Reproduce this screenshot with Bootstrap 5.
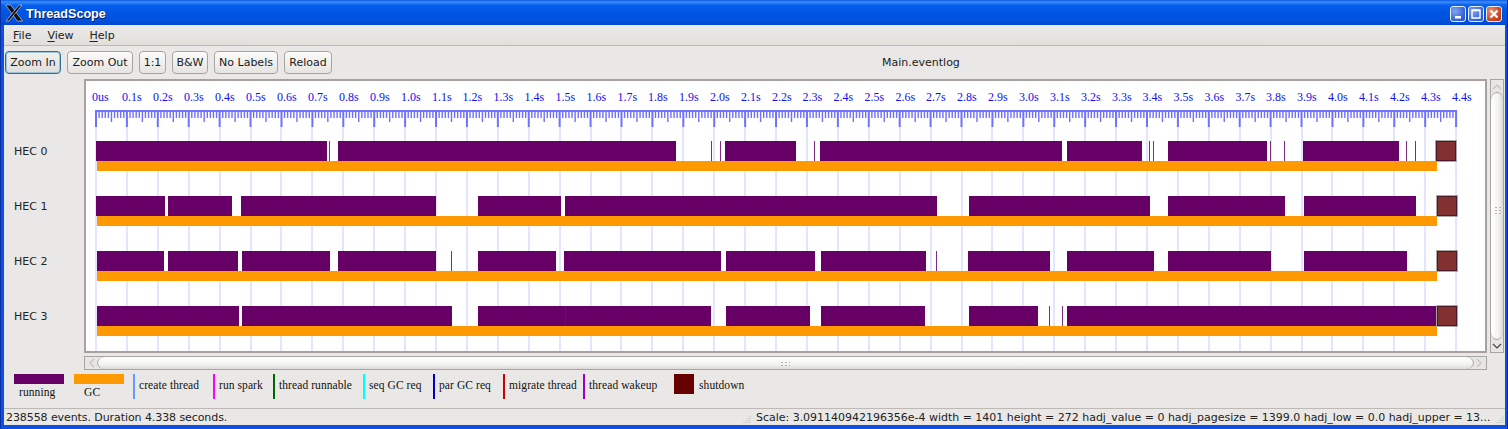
<!DOCTYPE html>
<html lang="en">
<head>
<meta charset="utf-8">
<title>ThreadScope</title>
<link href="https://cdn.jsdelivr.net/npm/bootstrap@5.3.0/dist/css/bootstrap.min.css" rel="stylesheet">
<style>
html,body{margin:0;height:429px;width:1508px;overflow:hidden;background:#0a3fd0}
body{font-family:"DejaVu Sans",sans-serif;font-size:11px;color:#111}
.xp-win{width:1508px;height:429px;background:#0d4fe0;border-left:1px solid #0831a8;border-right:1px solid #08239a}
.xp-title{height:25px;padding:0 5px 0 4px;background:linear-gradient(#0a5ae0 0,#3d8cf8 2px,#0660f0 5px,#0054e3 12px,#0050dc 22px,#0046c8 25px)}
.xp-logo{width:18px;height:18px;margin-right:3px;flex:none}
.xp-name{font-family:"Liberation Sans",sans-serif;font-weight:700;font-size:12.6px;color:#fff;text-shadow:1px 1px 0 #0a1a60;margin-top:3px}
.xp-ctls{column-gap:2px;margin-top:3px}
.xp-ctl{width:16px;height:16px;flex:none;border:1px solid #e8eefc;border-radius:3px;background:radial-gradient(circle at 30% 30%,#7ea4f0,#2f5bd2 75%)}
.xp-ctl svg{display:block}
.xp-ctl.xp-close{background:radial-gradient(circle at 30% 30%,#f09070,#c43a14 75%)}
.xp-body{margin:0 2px 0 3px;height:400px;background:#eae8e6;position:relative}
.xp-menu{height:21px;background:linear-gradient(#ecebe9,#e2dfdb);border-bottom:1px solid #bdb9b5;padding-left:9px;gap:16px}
.xp-menu span{line-height:21px;color:#222}
.xp-menu u{text-underline-offset:2px}
.xp-tools{height:33px;padding:5px 0 0 1px;gap:6px}
.xp-btn{height:23px;padding:0;font:11px "DejaVu Sans",sans-serif;color:#1a1a1a;line-height:20px;border:1px solid #a8a5a1;border-radius:4px;background:linear-gradient(#fbfbfa,#e6e4e1)}
.xp-btn:hover{border-color:#a8a5a1;color:#1a1a1a}
.xp-btn.xp-focus{border:1px solid #2f6f8f;box-shadow:inset 0 0 0 1px #9fc4d8;background:linear-gradient(#f2f1ef,#e0dedb)}
.xp-w56{width:56px}.xp-w66{width:66px}.xp-w27{width:27px}.xp-w36{width:36px}.xp-w64{width:64px}.xp-w48{width:48px}
.xp-file{position:absolute;left:878px;top:30px;color:#222}
.xp-main{height:274px}
.xp-side{width:80px;flex:none;padding:66px 0 0 10px}
.xp-hec{height:55px;line-height:14px;color:#222}
.xp-frame{width:1403px;flex:none;height:274px;border:2px solid #a8a19d;background:#fff}
.xp-frame svg{display:block}
.xp-ax{font-family:"Liberation Serif",serif;font-size:12px;fill:#1010f0}
.xp-vs{width:14px;flex:none;height:274px;margin-left:3px;border:1px solid #a8a5a1;background:#e8e6e3;position:relative}
.xp-vs i{position:absolute;left:0;right:0;top:12px;bottom:12px;border-radius:6px/8px;border-top:1px solid #a8a5a1;border-bottom:1px solid #a8a5a1;background:linear-gradient(90deg,#fff,#f4f3f2 60%,#dcdad7)}
.xp-hs{margin:3px 0 0 80px;width:1403px;height:14px;border:1px solid #a8a5a1;background:#e8e6e3;position:relative}
.xp-hs i{position:absolute;left:12px;right:12px;top:0;bottom:0;border-radius:8px/6px;border-left:1px solid #a8a5a1;border-right:1px solid #a8a5a1;background:linear-gradient(#fff,#f4f3f2 60%,#dcdad7)}
.xp-arrow{position:absolute}
.xp-au{left:1px;top:3px}.xp-ad{left:1px;bottom:2px}.xp-al{left:3px;top:1px}.xp-ar{right:3px;top:1px}
.xp-grip{position:absolute;left:695px;top:4px;width:10px;height:5px;background-image:radial-gradient(#b5b2ae 1px,transparent 1.2px);background-size:4px 3px}
.xp-vgrip{position:absolute;left:3px;top:126px;width:8px;height:10px;background-image:radial-gradient(#b5b2ae 1px,transparent 1.2px);background-size:4px 3px}
.xp-legend{margin-top:4px;padding-left:10px;height:34px;display:grid;grid-template-columns:50px 50px 70px 50px 80px 60px 60px 70px 80px auto;column-gap:10px;font-family:"Liberation Serif",serif;font-size:11.5px;letter-spacing:.08px;color:#111}
.xp-sw{height:10px}
.xp-run{background:#660066}
.xp-gc{background:#ff9900}
.xp-cap{line-height:14px;margin-top:1px;padding-left:5px}
.xp-cap2{padding-left:10px}
.xp-ev{height:25px;border-left:2px solid;padding-left:4px;line-height:22px;white-space:nowrap;margin-left:-1px}
.xp-shut{width:20px;height:20px;background:#660000;margin-right:5px;flex:none}
.xp-shut-t{line-height:22px}
.xp-stat{height:17px;border-top:1px solid #bdb9b5;padding-left:2px;line-height:17px;color:#222;position:relative}
.xp-stat-l{letter-spacing:-.08px}
.xp-stat-r{position:absolute;left:752px;top:0;letter-spacing:-.02px;white-space:nowrap}
.xp-g1,.xp-g2{position:absolute;bottom:1px;width:9px;height:9px}
.xp-g1{left:738px}
.xp-g2{right:1px}
</style>
</head>
<body>
<div class="xp-win d-flex flex-column">
  <div class="xp-title d-flex align-items-center">
    <svg class="xp-logo" viewBox="0 0 18 18"><path d="M0.5 1h5.2L17.5 17h-5.2z" fill="#111" stroke="#dfe6f5" stroke-width=".6"/><path d="M17 1h-3L1 17h3z" fill="#111" stroke="#dfe6f5" stroke-width=".6"/></svg>
    <span class="xp-name">ThreadScope</span>
    <div class="ms-auto d-flex xp-ctls">
      <div class="xp-ctl"><svg width="14" height="14" viewBox="0 0 14 14"><rect x="4" y="9" width="6" height="2.5" fill="#fff"/></svg></div>
      <div class="xp-ctl"><svg width="14" height="14" viewBox="0 0 14 14"><path d="M3 3h8v8H3z" fill="none" stroke="#fff" stroke-width="1.4"/><path d="M3 3.6h8" stroke="#fff" stroke-width="1.4"/></svg></div>
      <div class="xp-ctl xp-close"><svg width="14" height="14" viewBox="0 0 14 14"><path d="M3.5 3.5l7 7M10.5 3.5l-7 7" stroke="#fff" stroke-width="2.2"/></svg></div>
    </div>
  </div>
  <div class="xp-body">
    <div class="xp-menu d-flex">
      <span><u>F</u>ile</span><span><u>V</u>iew</span><span><u>H</u>elp</span>
    </div>
    <div class="xp-tools d-flex">
      <button class="btn xp-btn xp-focus xp-w56" type="button">Zoom In</button>
      <button class="btn xp-btn xp-w66" type="button">Zoom Out</button>
      <button class="btn xp-btn xp-w27" type="button">1:1</button>
      <button class="btn xp-btn xp-w36" type="button">B&amp;W</button>
      <button class="btn xp-btn xp-w64" type="button">No Labels</button>
      <button class="btn xp-btn xp-w48" type="button">Reload</button>
    </div>
    <div class="xp-file">Main.eventlog</div>
    <div class="xp-main d-flex">
      <div class="xp-side">
        <div class="xp-hec">HEC 0</div>
        <div class="xp-hec">HEC 1</div>
        <div class="xp-hec">HEC 2</div>
        <div class="xp-hec">HEC 3</div>
      </div>
      <div class="xp-frame">
        <svg id="plot" width="1399" height="270" viewBox="86 81 1399 270" xmlns="http://www.w3.org/2000/svg">
          <g id="under"></g>
          <g class="xp-ax">
            <text x="92" y="101">0us</text><text x="122" y="101">0.1s</text><text x="153" y="101">0.2s</text><text x="184" y="101">0.3s</text><text x="215" y="101">0.4s</text><text x="246" y="101">0.5s</text><text x="277" y="101">0.6s</text><text x="308" y="101">0.7s</text><text x="339" y="101">0.8s</text><text x="370" y="101">0.9s</text>
            <text x="401" y="101">1.0s</text><text x="432" y="101">1.1s</text><text x="462.5" y="101">1.2s</text><text x="493.5" y="101">1.3s</text><text x="524.5" y="101">1.4s</text><text x="555.5" y="101">1.5s</text><text x="586.5" y="101">1.6s</text><text x="617.5" y="101">1.7s</text><text x="648" y="101">1.8s</text><text x="679" y="101">1.9s</text>
            <text x="710" y="101">2.0s</text><text x="741" y="101">2.1s</text><text x="772" y="101">2.2s</text><text x="802.5" y="101">2.3s</text><text x="833.5" y="101">2.4s</text><text x="864.5" y="101">2.5s</text><text x="895.5" y="101">2.6s</text><text x="926" y="101">2.7s</text><text x="957" y="101">2.8s</text><text x="988" y="101">2.9s</text>
            <text x="1019" y="101">3.0s</text><text x="1050" y="101">3.1s</text><text x="1081" y="101">3.2s</text><text x="1112" y="101">3.3s</text><text x="1142.5" y="101">3.4s</text><text x="1173.5" y="101">3.5s</text><text x="1204.5" y="101">3.6s</text><text x="1235.5" y="101">3.7s</text><text x="1266" y="101">3.8s</text><text x="1297" y="101">3.9s</text>
            <text x="1328" y="101">4.0s</text><text x="1359" y="101">4.1s</text><text x="1390" y="101">4.2s</text><text x="1421" y="101">4.3s</text><text x="1452" y="101">4.4s</text>
          </g>
          <g id="over"></g>
        </svg>
      </div>
      <div class="xp-vs">
        <svg class="xp-arrow xp-au" width="10" height="7" viewBox="0 0 10 7"><path d="M1 6l4-4 4 4" fill="none" stroke="#c4c2bf" stroke-width="1.2"/></svg>
        <i></i><b class="xp-vgrip"></b>
        <svg class="xp-arrow xp-ad" width="10" height="7" viewBox="0 0 10 7"><path d="M1 1l4 4 4-4" fill="none" stroke="#444" stroke-width="1.2"/></svg>
      </div>
    </div>
    <div class="xp-hs">
      <svg class="xp-arrow xp-al" width="7" height="10" viewBox="0 0 7 10"><path d="M6 1L2 5l4 4" fill="none" stroke="#c4c2bf" stroke-width="1.2"/></svg>
      <i></i><b class="xp-grip"></b>
      <svg class="xp-arrow xp-ar" width="7" height="10" viewBox="0 0 7 10"><path d="M1 1l4 4-4 4" fill="none" stroke="#c4c2bf" stroke-width="1.2"/></svg>
    </div>
    <div class="xp-legend">
      <div><div class="xp-sw xp-run"></div><div class="xp-cap">running</div></div>
      <div><div class="xp-sw xp-gc"></div><div class="xp-cap xp-cap2">GC</div></div>
      <div class="xp-ev" style="border-color:#6699ff">create thread</div>
      <div class="xp-ev" style="border-color:#ff00ff">run spark</div>
      <div class="xp-ev" style="border-color:#006600">thread runnable</div>
      <div class="xp-ev" style="border-color:#00ffff">seq GC req</div>
      <div class="xp-ev" style="border-color:#0000cc">par GC req</div>
      <div class="xp-ev" style="border-color:#cc0000">migrate thread</div>
      <div class="xp-ev" style="border-color:#9900cc">thread wakeup</div>
      <div class="d-flex"><div class="xp-shut"></div><div class="xp-shut-t">shutdown</div></div>
    </div>
    <div class="xp-stat">
      <span class="xp-stat-l">238558 events. Duration 4.338 seconds.</span>
      <svg class="xp-g1" viewBox="0 0 9 9"><path d="M8 1v1M6 3v1M8 3v1M4 5v1M6 5v1M8 5v1M2 7v1M4 7v1M6 7v1M8 7v1" stroke="#bbb"/></svg>
      <span class="xp-stat-r">Scale: 3.091140942196356e-4 width = 1401 height = 272 hadj_value = 0 hadj_pagesize = 1399.0 hadj_low = 0.0 hadj_upper = 13...</span>
      <svg class="xp-g2" viewBox="0 0 9 9"><path d="M8 1v1M6 3v1M8 3v1M4 5v1M6 5v1M8 5v1M2 7v1M4 7v1M6 7v1M8 7v1" stroke="#bbb"/></svg>
    </div>
  </div>
</div>
<script>
(function(){
  var NS='http://www.w3.org/2000/svg',under=document.getElementById('under'),over=document.getElementById('over');
  function r(g,x,y,w,h,f,extra){var e=document.createElementNS(NS,'rect');e.setAttribute('x',x);e.setAttribute('y',y);e.setAttribute('width',w);e.setAttribute('height',h);e.setAttribute('fill',f);if(extra)for(var k in extra)e.setAttribute(k,extra[k]);g.appendChild(e);}
  var s=3.0911;
  for(var i=0;i<=44;i++){r(under,Math.round(96+i*10*s)-1,127,2,224,'#e4e4fc');}
  r(over,96,110,1360,2,'#7777ff');
  for(var j=0;j<=440;j++){
    var x=96+j*s,h=j%10==0?17:(j%5==0?12:8),w=j%10==0?2:1.4;
    r(over,x-w/2,110,w,h,'#7070ff');
  }
  var rows=[
    {y:141,b:[[96,327],[338,676],[725,796],[820,1062],[1067,1142],[1168,1267],[1303,1399]],t:[329,711,720,814,1149,1153,1270,1284,1406,1415],sx:1436},
    {y:196,b:[[96,165],[168,232],[241,436],[478,561],[565,937],[969,1150],[1168,1285],[1304,1416]],t:[],sx:1437},
    {y:251,b:[[97,164],[168,238],[242,330],[338,436],[478,556],[564,721],[726,815],[821,926],[968,1050],[1067,1154],[1168,1271],[1304,1407]],t:[451,936],sx:1437},
    {y:306,b:[[97,239],[242,452],[478,711],[726,810],[821,925],[969,1038],[1067,1437]],t:[1049,1062,565],sx:1437}
  ];
  rows.forEach(function(o){
    o.b.forEach(function(b){r(over,b[0],o.y,b[1]-b[0],20,'#660066');});
    o.t.forEach(function(t){r(over,t,o.y,1,20,t==565?'#6c0c6c':'#7f2a85');});
    r(over,97,o.y+20,1340,10,'#ff9900');
    r(over,o.sx-.5,o.y-.5,21,21,'none',{stroke:'#a8a8a8','stroke-width':1});
    r(over,o.sx+.5,o.y+.5,19,19,'#833030',{stroke:'#4a1a2a','stroke-width':1});
  });
})();
</script>
</body>
</html>
